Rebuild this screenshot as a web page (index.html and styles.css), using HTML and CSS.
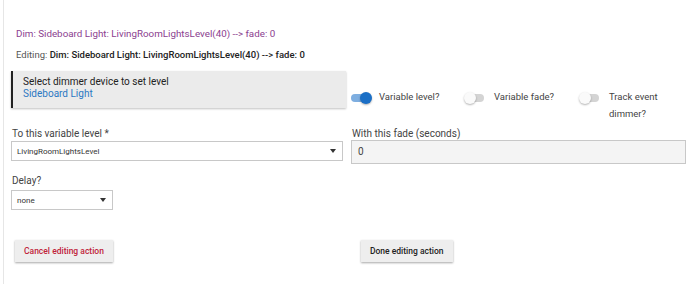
FILE: index.html
```html
<!DOCTYPE html>
<html lang="en">
<head>
<meta charset="utf-8">
<title>Edit action</title>
<link rel="stylesheet" href="styles.css">
</head>
<body>
<div class="page">
	<p class="action-title">Dim: Sideboard Light: LivingRoomLightsLevel(40) --&gt; fade: 0</p>
	<p class="editing">Editing: <b>Dim: Sideboard Light: LivingRoomLightsLevel(40) --&gt; fade: 0</b></p>

	<div class="row-top">
		<div class="device-box">
			<div>Select dimmer device to set level</div>
			<div class="device-name">Sideboard Light</div>
		</div>
		<div class="toggles">
			<div class="toggle-item">
				<span class="switch on"><span class="knob"></span></span>
				<span class="toggle-label">Variable level?</span>
			</div>
			<div class="toggle-item">
				<span class="switch"><span class="knob"></span></span>
				<span class="toggle-label">Variable fade?</span>
			</div>
			<div class="toggle-item">
				<span class="switch"><span class="knob"></span></span>
				<span class="toggle-label">Track event<br>dimmer?</span>
			</div>
		</div>
	</div>

	<div class="row-fields">
		<div class="field">
			<label class="field-label">To this variable level *</label>
			<div class="select wide">
				<span>LivingRoomLightsLevel</span>
				<span class="caret"></span>
			</div>
		</div>
		<div class="field">
			<label class="field-label">With this fade (seconds)</label>
			<div class="text-input">0</div>
		</div>
	</div>

	<div class="field delay">
		<label class="field-label">Delay?</label>
		<div class="select small">
			<span>none</span>
			<span class="caret"></span>
		</div>
	</div>

	<div class="row-buttons">
		<div class="btn-cell"><button class="btn cancel">Cancel editing action</button></div>
		<div class="btn-cell"><button class="btn done">Done editing action</button></div>
	</div>
</div>
</body>
</html>
```
FILE: styles.css
```css
html, body {
	margin: 0;
	background: #ffffff;
}
body {
	font-family: Roboto, "Noto Sans", sans-serif;
	font-size: 10px;
	color: #333333;
}
.page {
	margin-left: 3px;
	border-left: 1px solid #e6e6e6;
	height: 284px;
	padding: 28px 4px 0 7px;
	box-sizing: border-box;
}
.action-title {
	margin: 0 0 0 5px;
	color: #8b3e8f;
	font-size: 9.8px;
	line-height: 12px;
}
.editing {
	margin: 9px 0 0 5px;
	color: #555555;
	font-size: 9.5px;
	line-height: 12px;
}
.editing b {
	color: #222222;
	font-weight: 500;
}
.row-top {
	display: flex;
	align-items: flex-start;
	height: 37px;
	margin-top: 10px;
}
.device-box {
	width: 323px;
	height: 32px;
	background: #ebebeb;
	border-left: 2px solid #222222;
	box-shadow: 0 1px 2px rgba(0, 0, 0, 0.25);
	padding: 5px 0 0 10px;
	font-size: 10px;
	line-height: 12px;
	color: #222222;
	box-sizing: content-box;
}
.device-name {
	color: #2b78c2;
}
.toggles {
	display: flex;
	margin-left: 3px;
	margin-top: 20px;
}
.toggle-item {
	display: flex;
	align-items: flex-start;
	width: 115px;
}
.toggle-item:last-child {
	width: auto;
}
.switch {
	position: relative;
	width: 18px;
	height: 8px;
	border-radius: 4px;
	background: #d4d4d4;
	margin: 3px 10px 0 2px;
	flex: none;
}
.switch .knob {
	position: absolute;
	top: -2px;
	left: -2px;
	width: 12px;
	height: 12px;
	border-radius: 50%;
	background: #fafafa;
	box-shadow: 0 1px 2px rgba(0, 0, 0, 0.3);
}
.switch.on {
	background: #7eaee0;
}
.switch.on .knob {
	left: 9px;
	background: #1b6fc6;
}
.toggle-label {
	font-size: 9.5px;
	line-height: 17px;
	color: #444444;
	margin-top: -3px;
}
.row-fields {
	display: grid;
	grid-template-columns: 331px 335px;
	column-gap: 9px;
	margin-top: 20px;
}
.field {
	display: flex;
	flex-direction: column;
}
.field-label {
	font-size: 10px;
	line-height: 12px;
	color: #444444;
	margin-left: 1px;
	margin-bottom: 1px;
}
.select {
	display: flex;
	align-items: center;
	justify-content: space-between;
	height: 18px;
	border: 1px solid #c8c8c8;
	background: #ffffff;
	padding: 0 6px 0 5px;
	font-size: 8px;
	color: #333333;
	box-sizing: content-box;
}
.select.wide {
	width: 319px;
}
.select.small {
	width: 89px;
}
.caret {
	width: 0;
	height: 0;
	border-left: 3.5px solid transparent;
	border-right: 3.5px solid transparent;
	border-top: 4px solid #333333;
}
.text-input {
	height: 22px;
	line-height: 22px;
	margin-top: -1px;
	border: 1px solid #c8c8c8;
	background: #f4f4f4;
	padding-left: 6px;
	font-size: 10px;
	color: #444444;
}
.delay {
	margin-top: 11px;
	width: 101px;
}
.delay .field-label {
	margin-bottom: 3px;
}
.row-buttons {
	display: grid;
	grid-template-columns: 345px 335px;
	margin-top: 30px;
}
.btn-cell {
	padding-left: 4px;
}
.btn-cell + .btn-cell {
	padding-left: 5px;
}
.btn {
	font-family: Roboto, "Noto Sans", sans-serif;
	font-size: 8.5px;
	font-weight: 500;
	height: 22px;
	padding: 0 9px;
	border: none;
	border-radius: 0;
	background: #eeeeee;
	box-shadow: 0 1px 2px rgba(0, 0, 0, 0.35);
}
.btn.cancel {
	color: #c0233a;
}
.btn.done {
	color: #222222;
}
```
